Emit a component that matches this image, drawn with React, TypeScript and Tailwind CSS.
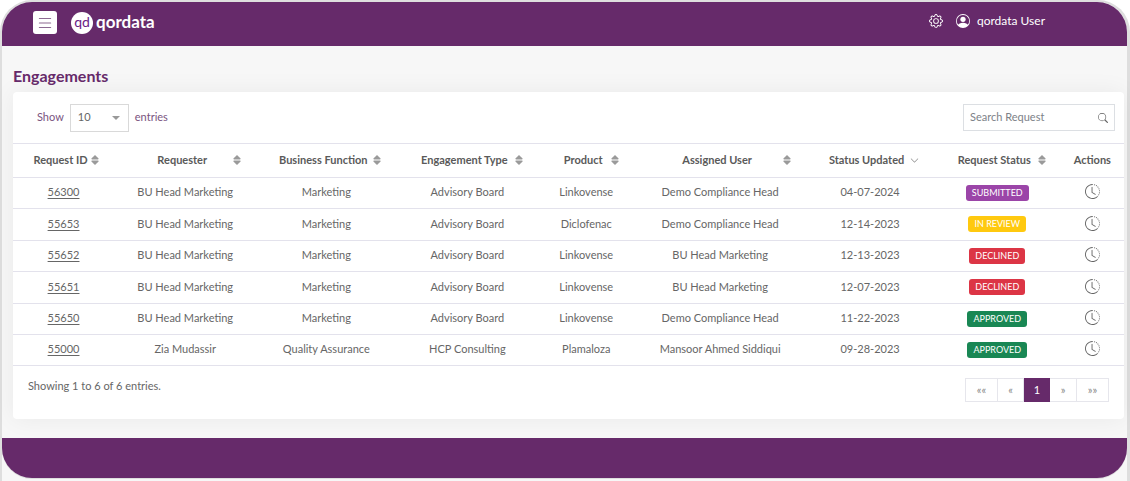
import { useState } from "react";
import {
  BsChevronDown,
  BsClockHistory,
  BsGear,
  BsList,
  BsPersonCircle,
  BsSearch,
} from "react-icons/bs";

type Status = "SUBMITTED" | "IN REVIEW" | "DECLINED" | "APPROVED";

interface Engagement {
  id: string;
  requester: string;
  fn: string;
  type: string;
  product: string;
  assigned: string;
  updated: string;
  status: Status;
}

const statusClass: Record<Status, string> = {
  SUBMITTED: "bg-[#9b45a8]",
  "IN REVIEW": "bg-[#ffc90f]",
  DECLINED: "bg-[#dc3545]",
  APPROVED: "bg-[#198754]",
};

const columns = [
  { label: "Request ID", width: "w-[9.1%]", sort: "both" },
  { label: "Requester", width: "w-[12.8%]", sort: "both" },
  { label: "Business Function", width: "w-[12.6%]", sort: "both" },
  { label: "Engagement Type", width: "w-[12.8%]", sort: "both" },
  { label: "Product", width: "w-[8.6%]", sort: "both" },
  { label: "Assigned User", width: "w-[15.5%]", sort: "both" },
  { label: "Status Updated", width: "w-[11.5%]", sort: "down" },
  { label: "Request Status", width: "w-[11.4%]", sort: "both" },
  { label: "Actions", width: "w-[5.7%]", sort: "none" },
];

const rows: Engagement[] = [
  { id: "56300", requester: "BU Head Marketing", fn: "Marketing", type: "Advisory Board", product: "Linkovense", assigned: "Demo Compliance Head", updated: "04-07-2024", status: "SUBMITTED" },
  { id: "55653", requester: "BU Head Marketing", fn: "Marketing", type: "Advisory Board", product: "Diclofenac", assigned: "Demo Compliance Head", updated: "12-14-2023", status: "IN REVIEW" },
  { id: "55652", requester: "BU Head Marketing", fn: "Marketing", type: "Advisory Board", product: "Linkovense", assigned: "BU Head Marketing", updated: "12-13-2023", status: "DECLINED" },
  { id: "55651", requester: "BU Head Marketing", fn: "Marketing", type: "Advisory Board", product: "Linkovense", assigned: "BU Head Marketing", updated: "12-07-2023", status: "DECLINED" },
  { id: "55650", requester: "BU Head Marketing", fn: "Marketing", type: "Advisory Board", product: "Linkovense", assigned: "Demo Compliance Head", updated: "11-22-2023", status: "APPROVED" },
  { id: "55000", requester: "Zia Mudassir", fn: "Quality Assurance", type: "HCP Consulting", product: "Plamaloza", assigned: "Mansoor Ahmed Siddiqui", updated: "09-28-2023", status: "APPROVED" },
];

function SortIcon() {
  return (
    <svg viewBox="0 0 8 10" className="h-[10px] w-2 shrink-0 fill-[#9a9a9a]" aria-hidden="true">
      <path d="M4 0 7.6 3.6Q7.8 4.4 7 4.4H1Q.2 4.4.4 3.6Z" />
      <path d="M4 10 7.6 6.4Q7.8 5.6 7 5.6H1Q.2 5.6.4 6.4Z" />
    </svg>
  );
}

function Logo() {
  return (
    <a href="#home" aria-label="qordata" className="flex items-center gap-[3px] text-white">
      <span className="flex size-[22px] items-center justify-center rounded-full bg-white pb-[2px] text-[14px] leading-none text-[#6a1b86]">
        qd
      </span>
      <span className="pb-[2px] text-[17px] leading-5 font-bold">qordata</span>
    </a>
  );
}

function Header() {
  return (
    <header className="flex h-11 items-start justify-between rounded-t-[30px] bg-[#662a6a] pr-[82px] pl-[31px] text-white">
      <div className="flex items-center gap-[14px] pt-[9px]">
        <button type="button" aria-label="Menu" className="flex h-[23px] w-6 items-center justify-center rounded-[3px] bg-white text-[#8d6a92]">
          <BsList className="size-[18px]" />
        </button>
        <Logo />
      </div>
      <div className="flex items-center gap-[13px] pt-[9px]">
        <button type="button" aria-label="Settings">
          <BsGear className="size-[14px]" />
        </button>
        <button type="button" className="flex items-center gap-[7px] text-xs leading-5">
          <BsPersonCircle className="size-[14px]" />
          <span>qordata User</span>
        </button>
      </div>
    </header>
  );
}

function Pagination() {
  const item = "flex h-full items-center justify-center border-r border-[#e6e6ec] text-[#8a8a8a]";
  return (
    <nav aria-label="Pagination" className="flex h-6 border border-r-0 border-[#e6e6ec] text-[11px]">
      <button type="button" aria-label="First page" className={`${item} w-8`}>««</button>
      <button type="button" aria-label="Previous page" className={`${item} w-[26px]`}>«</button>
      <button type="button" aria-current="page" className="-my-px flex w-[26px] items-center justify-center bg-[#662a6a] text-white">1</button>
      <button type="button" aria-label="Next page" className={`${item} w-[27px]`}>»</button>
      <button type="button" aria-label="Last page" className={`${item} w-8`}>»»</button>
    </nav>
  );
}

export default function App() {
  const [size, setSize] = useState("10");
  const [query, setQuery] = useState("");
  const cell = "border-b border-[#e3e2ec] px-0 pt-0 text-center whitespace-nowrap";

  return (
    <div className="min-h-screen bg-white font-['Lato','Open_Sans',sans-serif] text-[11px] text-[#666]">
      <div className="min-h-screen rounded-t-[32px] border-t-2 border-r-3 border-l-2 border-[#dedede] bg-[#f7f7f7]">
        <Header />
        <main className="pt-5 pr-[3px] pb-[19px] pl-[11px]">
          <h1 className="text-base leading-5 font-bold text-[#662a6a]">Engagements</h1>
          <section className="mt-[6px] rounded-[4px] bg-white shadow-[0_0_24px_rgba(0,0,0,0.06)]">
            <div className="flex h-[51px] items-center justify-between pr-[9px] pl-[24px]">
              <div className="flex items-center gap-[6px] text-[#7a5480]">
                <label htmlFor="page-size">Show</label>
                <div className="grid h-7 w-[59px] items-center border border-[#d9d9d9]">
                  <select
                    id="page-size"
                    value={size}
                    onChange={(e) => setSize(e.target.value)}
                    className="col-start-1 row-start-1 h-full w-full appearance-none bg-transparent pl-[7px] text-[#666] outline-none"
                  >
                    <option>10</option>
                    <option>25</option>
                    <option>50</option>
                  </select>
                  <svg viewBox="0 0 8 4" className="pointer-events-none col-start-1 row-start-1 mr-2 h-1 w-2 justify-self-end fill-[#999]" aria-hidden="true">
                    <path d="M0 0h8L4 4z" />
                  </svg>
                </div>
                <span>entries</span>
              </div>
              <div className="flex h-[27px] w-[152px] items-center border border-[#dcdfe3] px-[6px]">
                <input
                  type="search"
                  aria-label="Search Request"
                  placeholder="Search Request"
                  value={query}
                  onChange={(e) => setQuery(e.target.value)}
                  className="min-w-0 flex-1 bg-transparent outline-none placeholder:text-[#7d8288]"
                />
                <BsSearch className="size-[10px] shrink-0" />
              </div>
            </div>

            <table className="w-full table-fixed border-separate border-spacing-0 border-t border-[#e3e2ec]">
              <thead>
                <tr className="h-[34px]">
                  {columns.map((c) => (
                    <th key={c.label} scope="col" className={`${cell} ${c.width} pb-px font-bold text-[#5a5a5a]`}>
                      {c.sort === "none" ? (
                        c.label
                      ) : (
                        <button type="button" className="flex w-full items-center pr-[15px] pl-[17px] font-bold">
                          <span className="flex min-w-0 flex-1 justify-center">{c.label}</span>
                          {c.sort === "both" ? <SortIcon /> : <BsChevronDown className="size-[9px] shrink-0 text-[#888]" />}
                        </button>
                      )}
                    </th>
                  ))}
                </tr>
              </thead>
              <tbody>
                {rows.map((r) => (
                  <tr key={r.id} className="h-[31px] nth-[2]:h-8 nth-[4]:h-8">
                    <td className={`${cell} pb-px`}>
                      <a href={`#${r.id}`} className="underline underline-offset-2">{r.id}</a>
                    </td>
                    <td className={`${cell} pb-px`}>{r.requester}</td>
                    <td className={`${cell} pb-px`}>{r.fn}</td>
                    <td className={`${cell} pb-px`}>{r.type}</td>
                    <td className={`${cell} pb-px`}>{r.product}</td>
                    <td className={`${cell} pb-px`}>{r.assigned}</td>
                    <td className={`${cell} pb-px`}>{r.updated}</td>
                    <td className={`${cell} pb-0.5`}>
                      <span className={`inline-block rounded-[3px] px-[6px] align-middle text-[9px] leading-4 text-white ${statusClass[r.status]}`}>
                        {r.status}
                      </span>
                    </td>
                    <td className={`${cell} pb-1`}>
                      <button type="button" aria-label={`History of ${r.id}`} className="align-middle">
                        <BsClockHistory className="size-[15px]" />
                      </button>
                    </td>
                  </tr>
                ))}
              </tbody>
            </table>

            <div className="flex items-start justify-between pt-3 pr-[15px] pb-[17px] pl-[15px]">
              <p className="leading-4">Showing 1 to 6 of 6 entries.</p>
              <Pagination />
            </div>
          </section>
        </main>
        <footer className="h-10 rounded-b-[30px] bg-[#662a6a] shadow-[0_1px_0_#dedede]" />
      </div>
    </div>
  );
}
